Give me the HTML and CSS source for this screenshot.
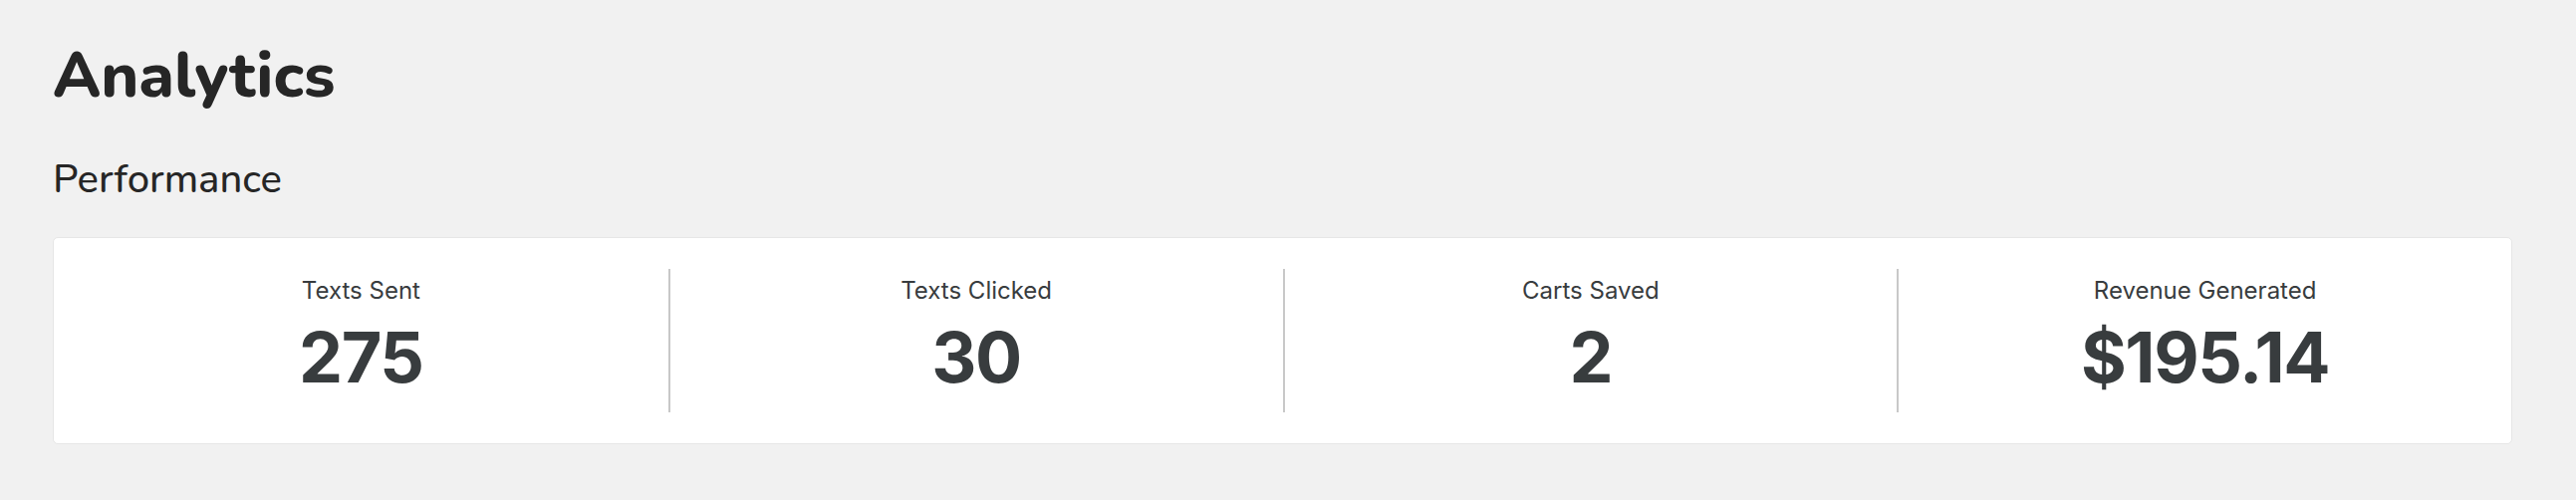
FILE: index.html
```html
<!DOCTYPE html>
<html lang="en">
<head>
    <meta charset="UTF-8">
    <title>Analytics</title>
    <link rel="stylesheet" href="styles.css">
</head>
<body>
    <div class="page">
        <h1>Analytics</h1>
        <h2>Performance</h2>

        <div class="stats-card">
            <div class="stat">
                <div class="stat-label">Texts Sent</div>
                <div class="stat-value">275</div>
            </div>
            <div class="stat">
                <div class="stat-label">Texts Clicked</div>
                <div class="stat-value">30</div>
            </div>
            <div class="stat">
                <div class="stat-label">Carts Saved</div>
                <div class="stat-value">2</div>
            </div>
            <div class="stat">
                <div class="stat-label">Revenue Generated</div>
                <div class="stat-value">$195.14</div>
            </div>
        </div>
    </div>
</body>
</html>
```

FILE: styles.css
```css
body {
    margin: 0;
    background-color: #f1f1f1;
    color: #262626;
    font-family: 'Nunito', 'Lato', sans-serif;
}
.page {
    padding: 36px 64px 40px 53px;
}
h1 {
    margin: 0;
    font-size: 64px;
    line-height: 80px;
    font-weight: 800;
}
h2 {
    margin: 40px 0 0;
    font-size: 40px;
    line-height: 48px;
    font-weight: 500;
}
.stats-card {
    display: grid;
    grid-template-columns: repeat(4, 1fr);
    margin-top: 34px;
    padding: 31px 0;
    background-color: #fff;
    border: 1px solid #e6e6e6;
    border-radius: 5px;
}
.stat {
    height: 144px;
    box-sizing: border-box;
    padding-top: 7px;
    text-align: center;
    color: #383c3e;
    font-family: 'Inter', sans-serif;
}
.stat + .stat {
    border-left: 2px solid #c8c8c8;
}
.stat-label {
    font-size: 24px;
    line-height: 29px;
}
.stat-value {
    margin-top: 10px;
    font-size: 70px;
    line-height: 85px;
    font-weight: 700;
    letter-spacing: -0.02em;
}
```
